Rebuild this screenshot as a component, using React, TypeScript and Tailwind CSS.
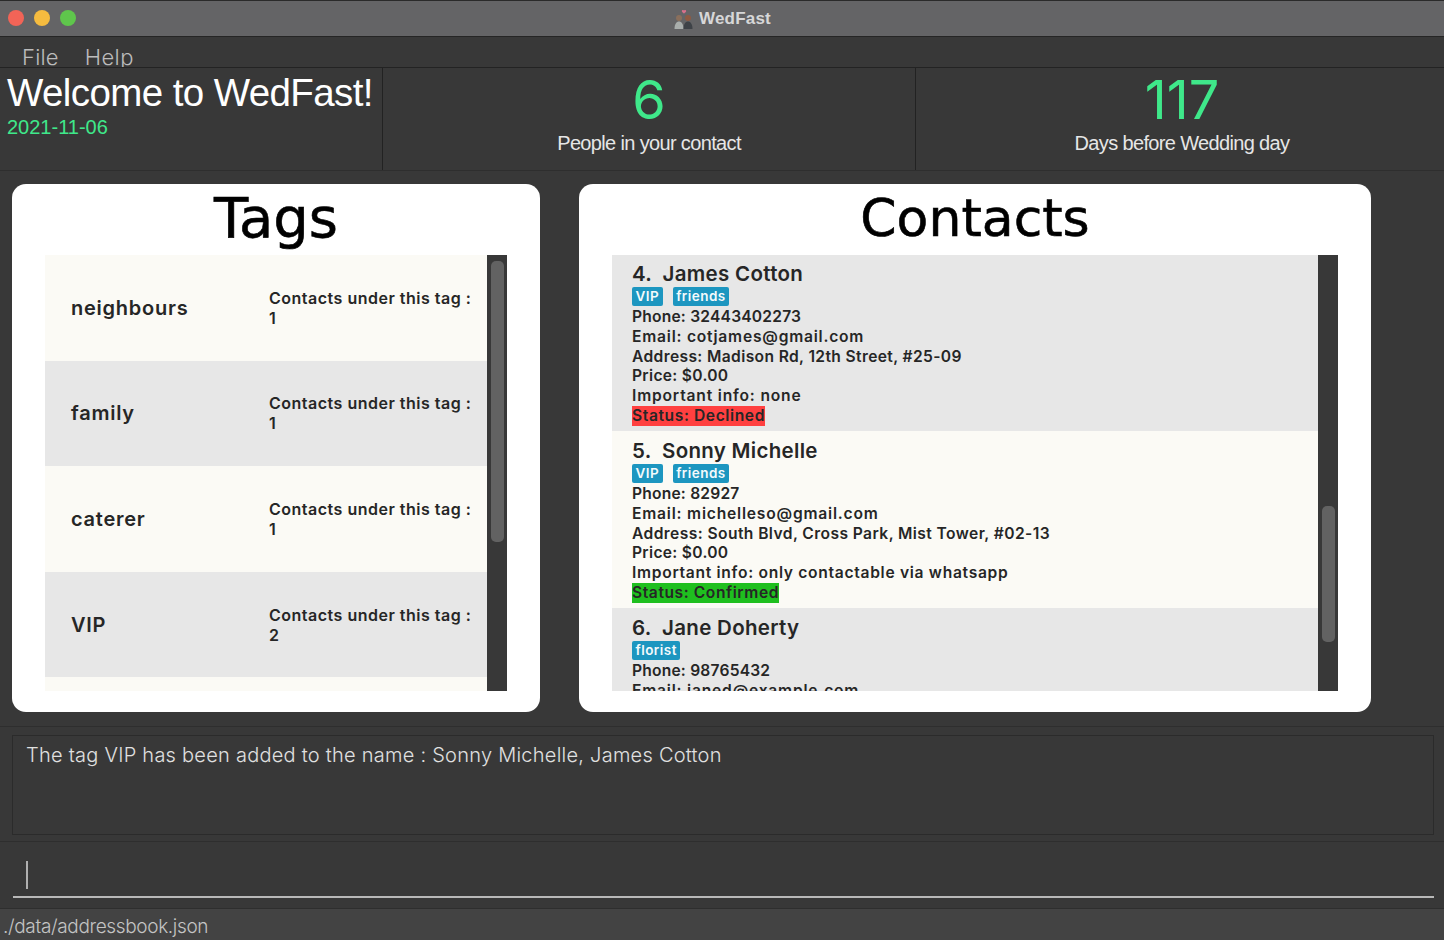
import React from "react";

const M = "font-['Inter','Noto_Sans',sans-serif]";

function TagRow({ name, count, alt }: { name: string; count: string; alt?: boolean }) {
  return (
    <div className={`flex h-[105.6px] shrink-0 items-center pl-[26px] ${alt ? "bg-[#e7e7e7]" : "bg-[#fbfaf5]"}`}>
      <div className="w-[198px] text-[20px] font-semibold tracking-[0.75px] text-[#262626]">{name}</div>
      <div className="text-[16px] font-semibold leading-[20px] tracking-[0.5px] text-[#262626]">
        <div>Contacts under this tag :</div>
        <div>{count}</div>
      </div>
    </div>
  );
}

function Tag({ children }: { children: React.ReactNode }) {
  return (
    <span className="flex h-[19px] items-center rounded-[2px] bg-[#1d96c0] px-[3.5px] text-[13.5px] font-semibold tracking-[0.45px] text-[#f4fafc]">
      {children}
    </span>
  );
}

type LineDef = { text: string; cls: string };

function ContactRow({
  title,
  tags,
  lines,
  status,
  statusCls,
  alt,
  last,
}: {
  title: string;
  tags: string[];
  lines: LineDef[];
  status?: string;
  statusCls?: string;
  alt?: boolean;
  last?: boolean;
}) {
  return (
    <div
      className={`shrink-0 pl-[20px] pt-[8px] text-[15.6px] font-semibold text-[#262626] ${last ? "h-[90px]" : "h-[177px]"} ${alt ? "bg-[#e7e7e7]" : "bg-[#fbfaf5]"}`}
    >
      <div className="h-[24px] whitespace-pre text-[20.5px] leading-[24px] tracking-[0.3px]">{title}</div>
      <div className="flex h-[21px] items-start gap-[10px] pt-[1px]">
        {tags.map((t) => (
          <Tag key={t}>{t}</Tag>
        ))}
      </div>
      {lines.map((l) => (
        <div key={l.text} className={`h-[19.8px] whitespace-nowrap leading-[20px] ${l.cls}`}>
          {l.text}
        </div>
      ))}
      {status && (
        <div className={`h-[19.8px] w-fit whitespace-nowrap leading-[20px] ${statusCls}`}>{status}</div>
      )}
    </div>
  );
}

function ScrollTrack({ top, height }: { top: string; height: string }) {
  return (
    <div className="relative w-[20px] shrink-0 bg-[#383838]">
      <div className={`absolute left-[4px] w-[13px] rounded-[5px] bg-[#626262] ${top} ${height}`} />
    </div>
  );
}

export default function App() {
  return (
    <div className={`flex h-[940px] w-[1444px] flex-col overflow-hidden bg-[#383838] ${M}`}>
      {/* title bar */}
      <div className="relative flex h-[37px] shrink-0 items-center justify-center border-y border-t-[#2a2a2a] border-b-[#252525] bg-[#646466]">
        <div className="absolute left-[8px] top-[9px] flex gap-[10px]">
          <div className="h-[16px] w-[16px] rounded-full bg-[#f26457]" />
          <div className="h-[16px] w-[16px] rounded-full bg-[#f5bb3f]" />
          <div className="h-[16px] w-[16px] rounded-full bg-[#5fc64c]" />
        </div>
        <div className="flex items-center gap-[5px]">
          <svg width="21" height="20" viewBox="0 0 21 20">
            <path d="M9 1.500c1-1 2 .2 2 .2s1-1.200 2-.2c.8 1-2 3-2 3s-2.800-2-2-3z" fill="#d9708c" />
            <circle cx="6" cy="9" r="3" fill="#8a6f5c" />
            <circle cx="15" cy="9" r="3" fill="#8d5a42" />
            <path d="M1.500 20c0-5 2-7.500 4.500-7.500s4.500 2.500 4.500 7.500z" fill="#a9aeac" />
            <path d="M10.500 20c0-5 2-7.500 4.500-7.500s4.500 2.500 4.500 7.500z" fill="#3e4247" />
          </svg>
          <span className="font-['Liberation_Sans',sans-serif] text-[17px] font-bold tracking-[0.2px] text-[#d7d7d8]">WedFast</span>
        </div>
      </div>

      {/* menu */}
      <div className="flex h-[31px] shrink-0 items-start gap-[26px] overflow-hidden border-b border-[#232323] bg-[#383838] pl-[22px] pt-[7px] text-[22px] leading-[26px] text-[#bcbcbc]">
        <span className="font-light tracking-[0.2px]">File</span>
        <span className="font-light tracking-[0.4px]">Help</span>
      </div>

      {/* header */}
      <div className="flex h-[103px] shrink-0 border-b border-[#2e2e2e] font-['Liberation_Sans',sans-serif]">
        <div className="w-[383px] shrink-0 border-r border-[#222222] pl-[7px] pt-[2px]">
          <div className="whitespace-nowrap text-[38.5px] leading-[46px] tracking-[-0.6px] text-white">Welcome to WedFast!</div>
          <div className="-mt-[1px] text-[20px] leading-[24px] text-[#3fe88a]">2021-11-06</div>
        </div>
        <div className="flex w-[533px] shrink-0 flex-col items-center border-r border-[#222222] pt-[2px]">
          <div className={`text-[54px] font-normal leading-[60px] text-[#3fe88a] ${M}`}>6</div>
          <div className="mt-[1px] text-[20px] leading-[24px] tracking-[-0.65px] text-[#e6e6e6]">People in your contact</div>
        </div>
        <div className="flex w-[532px] shrink-0 flex-col items-center pt-[2px]">
          <div className={`text-[54px] font-normal leading-[60px] text-[#3fe88a] ${M}`}>117</div>
          <div className="mt-[1px] text-[20px] leading-[24px] tracking-[-0.65px] text-[#e6e6e6]">Days before Wedding day</div>
        </div>
      </div>

      {/* main */}
      <div className="flex h-[555px] shrink-0 gap-[39px] pl-[12px] pt-[13px]">
        <div className="flex h-[528px] w-[528px] flex-col rounded-[14px] bg-white px-[33px]">
          <div className="h-[71px] text-center font-['DejaVu_Sans',sans-serif] text-[56px] leading-[68px] text-black [-webkit-text-stroke:0.6px_black]">Tags</div>
          <div className="flex h-[436px] overflow-hidden">
            <div className="flex min-w-0 flex-1 flex-col overflow-hidden">
              <TagRow name="neighbours" count="1" />
              <TagRow name="family" count="1" alt />
              <TagRow name="caterer" count="1" />
              <TagRow name="VIP" count="2" alt />
              <div className="h-[20px] shrink-0 bg-[#fbfaf5]" />
            </div>
            <ScrollTrack top="top-[6px]" height="h-[281px]" />
          </div>
        </div>

        <div className="flex h-[528px] w-[792px] flex-col rounded-[14px] bg-white px-[33px]">
          <div className="h-[71px] text-center font-['DejaVu_Sans',sans-serif] text-[52px] leading-[68px] text-black [-webkit-text-stroke:0.6px_black]">Contacts</div>
          <div className="flex h-[436px] overflow-hidden">
            <div className="flex min-w-0 flex-1 flex-col overflow-hidden">
              <div className="-mt-[1px] flex flex-col">
                <ContactRow
                  alt
                  title="4.  James Cotton"
                  tags={["VIP", "friends"]}
                  lines={[
                    { text: "Phone: 32443402273", cls: "tracking-[0.2px]" },
                    { text: "Email: cotjames@gmail.com", cls: "tracking-[0.78px]" },
                    { text: "Address: Madison Rd, 12th Street, #25-09", cls: "tracking-[0.37px]" },
                    { text: "Price: $0.00", cls: "tracking-[0.3px]" },
                    { text: "Important info: none", cls: "tracking-[0.82px]" },
                  ]}
                  status="Status: Declined"
                  statusCls="bg-[#ff4040] tracking-[0.6px]"
                />
                <ContactRow
                  title="5.  Sonny Michelle"
                  tags={["VIP", "friends"]}
                  lines={[
                    { text: "Phone: 82927", cls: "tracking-[0.2px]" },
                    { text: "Email: michelleso@gmail.com", cls: "tracking-[0.8px]" },
                    { text: "Address: South Blvd, Cross Park, Mist Tower, #02-13", cls: "tracking-[0.42px]" },
                    { text: "Price: $0.00", cls: "tracking-[0.3px]" },
                    { text: "Important info: only contactable via whatsapp", cls: "tracking-[0.7px]" },
                  ]}
                  status="Status: Confirmed"
                  statusCls="bg-[#1fbf1f] tracking-[0.57px]"
                />
                <ContactRow
                  alt
                  last
                  title="6.  Jane Doherty"
                  tags={["florist"]}
                  lines={[
                    { text: "Phone: 98765432", cls: "tracking-[0.2px]" },
                    { text: "Email: janed@example.com", cls: "tracking-[0.8px]" },
                  ]}
                />
              </div>
            </div>
            <ScrollTrack top="top-[251px]" height="h-[136px]" />
          </div>
        </div>
      </div>

      {/* result */}
      <div className="h-[116px] shrink-0 border-y border-[#2e2e2e] pl-[12px] pr-[10px] pt-[8px]">
        <div className="h-[100px] border border-[#2b2b2b] pl-[13px] pt-[5px] text-[20px] font-light leading-[28px] tracking-[0.25px] text-[#e0e0e0]">
          The tag VIP has been added to the name : Sonny Michelle, James Cotton
        </div>
      </div>

      {/* command */}
      <div className="h-[66px] shrink-0 pl-[13px] pr-[10px] pt-[20px]">
        <div className="h-[37px] border-b-2 border-[#b8b8b8] pl-[13px]">
          <div className="-mt-[1px] h-[28px] w-[2px] bg-[#b0b0b0]" />
        </div>
      </div>

      {/* status */}
      <div className="flex h-[32px] shrink-0 items-center border-t border-[#2e2e2e] bg-[#434343] pl-[3px] pt-[6px] text-[19px] font-light tracking-[-0.35px] text-[#c4c4c4]">
        ./data/addressbook.json
      </div>
    </div>
  );
}
